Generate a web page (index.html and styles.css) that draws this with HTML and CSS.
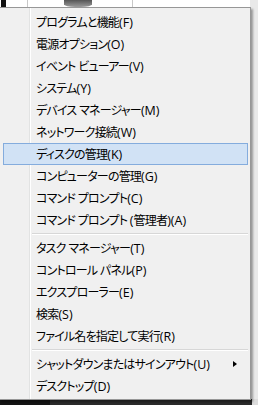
FILE: index.html
```html
<!DOCTYPE html>
<html lang="ja">
  <head>
    <meta charset="UTF-8" />
    <meta name="viewport" content="width=device-width, initial-scale=1.0" />
    <title>Win+X</title>
    <link rel="stylesheet" href="styles.css">
  </head>
  <body>
    <div class="desktop">
      <div class="backdrop">
        <span class="bit bit-black"></span>
        <span class="bit bit-line1"></span>
        <span class="bit bit-knob"></span>
        <span class="bit bit-line2"></span>
      </div>

      <ul class="menu">
        <li class="item">プログラムと機能<span class="key">(F)</span></li>
        <li class="item">電源オプション<span class="key">(O)</span></li>
        <li class="item">イベント<span class="gap"> </span>ビューアー<span class="key">(V)</span></li>
        <li class="item">システム<span class="key">(Y)</span></li>
        <li class="item">デバイス<span class="gap"> </span>マネージャー<span class="key">(M)</span></li>
        <li class="item">ネットワーク接続<span class="key">(W)</span></li>
        <li class="item hover">ディスクの管理<span class="key">(K)</span></li>
        <li class="item">コンピューターの管理<span class="key">(G)</span></li>
        <li class="item">コマンド<span class="gap"> </span>プロンプト<span class="key">(C)</span></li>
        <li class="item">コマンド<span class="gap"> </span>プロンプト<span class="gap"> </span><span class="key">(</span>管理者<span class="key">)(A)</span></li>
        <li class="sep"></li>
        <li class="item">タスク<span class="gap"> </span>マネージャー<span class="key">(T)</span></li>
        <li class="item">コントロール<span class="gap"> </span>パネル<span class="key">(P)</span></li>
        <li class="item">エクスプローラー<span class="key">(E)</span></li>
        <li class="item">検索<span class="key">(S)</span></li>
        <li class="item">ファイル名を指定して実行<span class="key">(R)</span></li>
        <li class="sep"></li>
        <li class="item sub">シャットダウンまたはサインアウト<span class="key">(U)</span></li>
        <li class="item">デスクトップ<span class="key">(D)</span></li>
      </ul>
    </div>
  </body>
</html>
```

FILE: styles.css
```css
body {
  margin: 0;
  font-family: "Noto Sans CJK JP", "Noto Sans", sans-serif;
}

.desktop {
  position: relative;
  width: 258px;
  height: 405px;
  overflow: hidden;
  background: linear-gradient(to right, #ffffff 0, #ffffff 250px, #e9e9e9 250px);
}

/* bottom strip: taskbar */
.desktop::after {
  content: "";
  position: absolute;
  left: 0;
  right: 0;
  bottom: 0;
  height: 6px;
  background: linear-gradient(to right, #141414 0, #141414 50px, #2a2a2a 50px, #2a2a2a 252px, #dcdcdc 252px);
}

/* window bits peeking above the menu */
.backdrop .bit {
  position: absolute;
  top: 0;
  height: 7px;
}

.bit-black {
  left: 1px;
  width: 5px;
  background: #111;
}

.bit-line1 {
  left: 27px;
  width: 1px;
  background: #c8c8c8;
}

.bit-knob {
  left: 64px;
  width: 28px;
  border-radius: 0 0 40% 40%;
  background: linear-gradient(to bottom, #555, #9a9a9a);
}

.bit-line2 {
  left: 132px;
  width: 1px;
  background: #c8c8c8;
}

.menu {
  position: relative;
  z-index: 1;
  box-sizing: border-box;
  width: 252px;
  margin: 7px 0 0 -1px;
  padding: 3px 2px 2px 3px;
  list-style: none;
  border: 1px solid #979797;
  background:
    linear-gradient(to right, transparent 30px, #e2e3e3 30px, #e2e3e3 31px, #ffffff 31px, #ffffff 32px, transparent 32px),
    #f0f0f0;
  background-origin: border-box;
  background-repeat: no-repeat;
  box-shadow: 2px 2px 2px rgba(0, 0, 0, 0.35);
}

.menu .item {
  position: relative;
  box-sizing: border-box;
  height: 22px;
  padding-left: 32px;
  border: 1px solid transparent;
  font-size: 12px;
  line-height: 20px;
  letter-spacing: -0.8px;
  color: #000;
  font-feature-settings: "palt";
  white-space: nowrap;
}

.menu .item .key {
  font-family: "Open Sans", "Noto Sans", sans-serif;
  font-size: 12.5px;
  letter-spacing: 0;
}

.menu .item .gap {
  letter-spacing: 0;
}

.menu .item.hover {
  border-color: #84acdd;
  background: #d1e2f5;
}

.menu .item.sub::after {
  content: "";
  position: absolute;
  top: 7px;
  right: 10px;
  border-top: 3.5px solid transparent;
  border-bottom: 3.5px solid transparent;
  border-left: 4px solid #000;
}

.menu .sep {
  height: 6px;
  margin-left: 29px;
  background: linear-gradient(to bottom, transparent 2px, #d7d7d7 2px, #d7d7d7 3px, #ffffff 3px, #ffffff 4px, transparent 4px);
}
```
